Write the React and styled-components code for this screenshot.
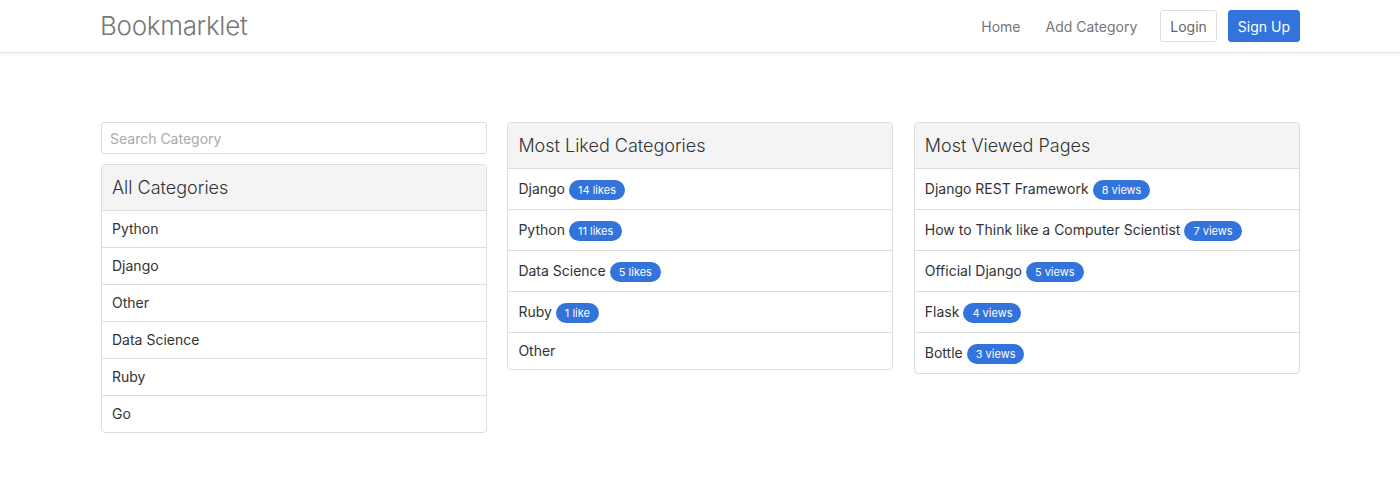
import React from 'react'
import styled, { createGlobalStyle } from 'styled-components'

const GlobalStyle = createGlobalStyle`
  body {
    margin: 0;
    background: #fff;
    font-family: Inter, "Noto Sans", sans-serif;
    color: #333;
  }
  * { box-sizing: border-box; }
`

const NavBar = styled.nav`
  height: 53px;
  border-bottom: 1px solid #e6e6e6;
  box-shadow: 0 1px 3px rgba(0, 0, 0, 0.06);
`

const NavInner = styled.div`
  width: 1200px;
  margin: 0 auto;
  height: 52px;
  display: flex;
  align-items: center;
  justify-content: space-between;
`

const Brand = styled.a`
  font-size: 26px;
  font-weight: 300;
  color: #777;
  letter-spacing: -0.3px;
  margin-top: -1px;
`

const NavLinks = styled.div`
  display: flex;
  align-items: center;
`

const NavLink = styled.a`
  font-size: 14px;
  color: #777;
  margin-right: ${p => (p.$last ? '23px' : '25px')};
`

const Button = styled.button`
  font-family: inherit;
  font-size: 14px;
  height: 32px;
  padding: 0 9px;
  border-radius: 3px;
  margin-left: ${p => (p.$primary ? '11px' : '0')};
  border: 1px solid ${p => (p.$primary ? '#3273dc' : '#ddd')};
  background: ${p => (p.$primary ? '#3273dc' : '#fff')};
  color: ${p => (p.$primary ? '#fff' : '#666')};
`

const Main = styled.main`
  width: 1200px;
  margin: 69px auto 0;
  padding-left: 1px;
  display: grid;
  grid-template-columns: repeat(3, 386px);
  column-gap: 20.4px;
  align-items: start;
`

const Column = styled.div`
  display: flex;
  flex-direction: column;
  gap: 10px;
`

const Search = styled.input`
  font-family: inherit;
  font-size: 14px;
  height: 32px;
  padding: 0 8px;
  border: 1px solid #ddd;
  border-radius: 3px;
  color: #333;
  &::placeholder { color: #aaa; }
`

const Panel = styled.section`
  border: 1px solid #ddd;
  border-radius: 4px;
  overflow: hidden;
`

const PanelHeader = styled.h3`
  margin: 0;
  height: 45px;
  padding: 0 10px;
  display: flex;
  align-items: center;
  background: #f4f4f4;
  font-size: 18px;
  font-weight: 300;
  color: #333;
`

const Row = styled.div`
  display: flex;
  align-items: center;
  height: ${p => (p.$tall ? '41px' : '37px')};
  padding: 0 10px 2px;
  border-top: 1px solid #ddd;
  font-size: 14px;
  color: #333;
`

const Badge = styled.span`
  display: inline-flex;
  align-items: center;
  height: 20px;
  padding: 0 9px;
  margin-left: 4px;
  margin-top: 3px;
  border-radius: 10px;
  background: #3273dc;
  color: #fff;
  font-size: 11px;
`

const allCategories = ['Python', 'Django', 'Other', 'Data Science', 'Ruby', 'Go']

const liked = [
  ['Django', '14 likes'],
  ['Python', '11 likes'],
  ['Data Science', '5 likes'],
  ['Ruby', '1 like'],
  ['Other', null],
]

const viewed = [
  ['Django REST Framework', '8 views'],
  ['How to Think like a Computer Scientist', '7 views'],
  ['Official Django', '5 views'],
  ['Flask', '4 views'],
  ['Bottle', '3 views'],
]

const ListPanel = ({ title, items }) => (
  <Panel>
    <PanelHeader>{title}</PanelHeader>
    {items.map(([name, count]) => (
      <Row key={name} $tall={!!count}>
        {name}
        {count && <Badge>{count}</Badge>}
      </Row>
    ))}
  </Panel>
)

const App = () => (
  <>
    <GlobalStyle />
    <NavBar>
      <NavInner>
        <Brand>Bookmarklet</Brand>
        <NavLinks>
          <NavLink>Home</NavLink>
          <NavLink $last>Add Category</NavLink>
          <Button>Login</Button>
          <Button $primary>Sign Up</Button>
        </NavLinks>
      </NavInner>
    </NavBar>
    <Main>
      <Column>
        <Search placeholder="Search Category" />
        <ListPanel title="All Categories" items={allCategories.map(c => [c, null])} />
      </Column>
      <ListPanel title="Most Liked Categories" items={liked} />
      <ListPanel title="Most Viewed Pages" items={viewed} />
    </Main>
  </>
)

export default App
